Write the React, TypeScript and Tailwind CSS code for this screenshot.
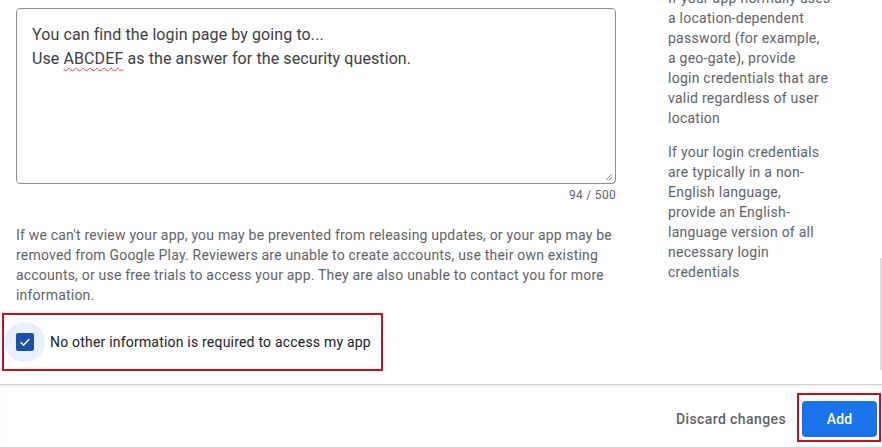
const tipOne = [
  "If your app normally uses",
  "a location-dependent",
  "password (for example,",
  "a geo-gate), provide",
  "login credentials that are",
  "valid regardless of user",
  "location",
];

const tipTwo = [
  "If your login credentials",
  "are typically in a non-",
  "English language,",
  "provide an English-",
  "language version of all",
  "necessary login",
  "credentials",
];

export default function App() {
  return (
    <div className="relative h-[447px] w-[882px] overflow-hidden bg-white font-['Roboto','Liberation_Sans',sans-serif]">
      <div className="flex h-[384px] overflow-hidden">
        <div className="w-[616px] shrink-0 pl-4 pt-2">
          <div className="relative h-[176px] w-[600px] rounded border border-[#8a8f94] pl-[15px] pr-4 pt-[14px] text-base leading-6 tracking-[0.1px] text-[#3c4043]">
            <p>You can find the login page by going to...</p>
            <p>
              Use{" "}
              <span className="underline decoration-[#e53935] decoration-wavy decoration-1 underline-offset-[3px]">
                ABCDEF
              </span>{" "}
              as the answer for the security question.
            </p>
            <svg className="absolute bottom-[2px] right-[2px]" width="9" height="9" viewBox="0 0 9 9">
              <path d="M8 2 L2 8 M8 5 L5 8" stroke="#80868b" strokeWidth="1" fill="none" />
            </svg>
          </div>
          <div className="mt-[3px] text-right text-xs leading-4 tracking-[0.3px] text-[#5f6368]">94 / 500</div>
          <p className="mt-[22px] text-sm leading-5 tracking-[0.2px] text-[#5f6368]">
            If we can't review your app, you may be prevented from releasing updates, or your app may be removed from
            Google Play. Reviewers are unable to create accounts, use their own existing accounts, or use free trials to
            access your app. They are also unable to contact you for more information.
          </p>
          <div className="-ml-[14px] mt-2 flex h-[58px] w-[381px] items-center border-2 border-[#c1121f] pb-px pl-px">
            <div className="flex h-10 w-10 items-center justify-center rounded-full bg-[#e8f0fe]">
              <div className="flex h-[18px] w-[18px] items-center justify-center rounded-[2px] bg-[#1b4fa8]">
                <svg width="14" height="14" viewBox="0 0 24 24">
                  <path d="M4.5 12.5 L9.5 17.5 L19.5 7" stroke="white" strokeWidth="2.6" fill="none" />
                </svg>
              </div>
            </div>
            <span className="ml-[5px] text-sm leading-5 tracking-[0.2px] text-[#202124]">
              No other information is required to access my app
            </span>
          </div>
        </div>
        <div className="-mt-3 ml-[52px] w-[180px] shrink-0 whitespace-nowrap text-sm leading-5 tracking-[0.25px] text-[#5f6368]">
          <p>
            {tipOne.map((line) => (
              <span key={line} className="block">
                {line}
              </span>
            ))}
          </p>
          <p className="mt-[14px]">
            {tipTwo.map((line) => (
              <span key={line} className="block">
                {line}
              </span>
            ))}
          </p>
        </div>
      </div>
      <div className="absolute right-0 top-[258px] h-[112px] w-[2px] bg-[#dadce0]" />
      <footer className="flex h-[63px] items-start justify-end border-t border-[#d3d3d3] pr-px pt-2 shadow-[inset_0_2px_2px_rgba(0,0,0,0.06)]">
        <div className="flex items-center">
          <button className="mr-[3px] mt-[3px] px-2 text-sm font-medium leading-5 tracking-[0.4px] text-[#5f6368]">
            Discard changes
          </button>
          <div className="border-2 border-[#c1121f] pb-[3px] pl-[3px] pr-[2px] pt-[6px]">
            <button className="h-9 w-[75px] rounded bg-[#1a73e8] text-sm font-medium tracking-[0.2px] text-white">
              Add
            </button>
          </div>
        </div>
      </footer>
    </div>
  );
}
